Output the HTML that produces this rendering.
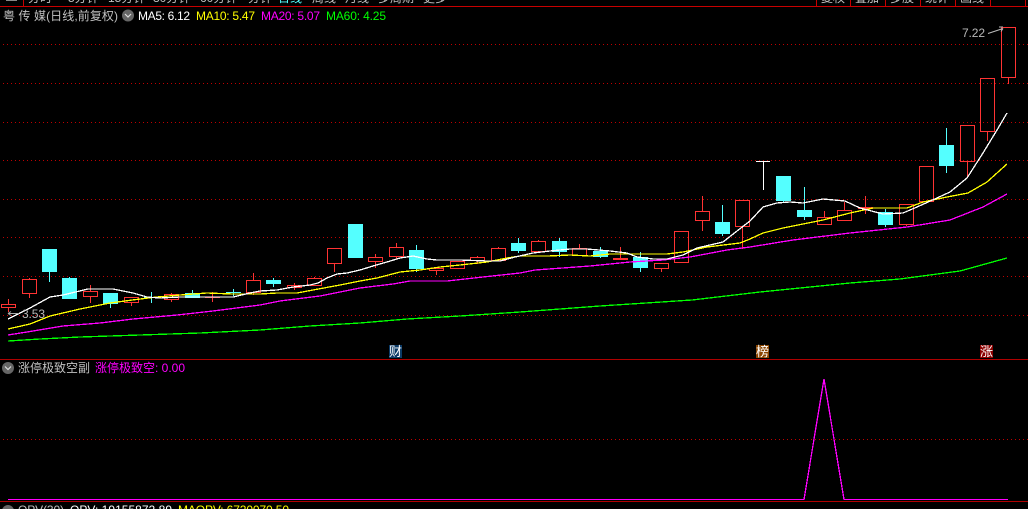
<!DOCTYPE html>
<html><head><meta charset="utf-8"><style>
html,body{margin:0;padding:0;background:#000;width:1028px;height:509px;overflow:hidden}
svg{display:block}
text{font-family:"Liberation Sans","WenQuanYi Zen Hei","Noto Sans CJK SC",sans-serif;font-size:12px}
</style></head><body>
<svg width="1028" height="509" viewBox="0 0 1028 509" xmlns="http://www.w3.org/2000/svg">
<rect width="1028" height="509" fill="#000"/>
<!-- toolbar -->
<g fill="#c0c0c0">
<text x="28" y="2">分时</text><text x="68" y="2">5分钟</text><text x="108" y="2">15分钟</text><text x="153" y="2">30分钟</text><text x="200" y="2">60分钟</text><text x="248" y="2">分钟</text>
<text x="278" y="2" fill="#54ffff">日线</text><text x="312" y="2">周线</text><text x="345" y="2">月线</text><text x="378" y="2">多周期</text><text x="423" y="2">更多</text>
<text x="821" y="2">复权</text><text x="855" y="2">叠加</text><text x="890" y="2">多股</text><text x="925" y="2">统计</text><text x="960" y="2">画线</text>
</g>
<rect x="6" y="0" width="11" height="1" fill="#888"/>
<g shape-rendering="crispEdges" stroke="#c80000" fill="none">
<path d="M0 6.500H1028M23.500 0V6M816.500 0V6M850.500 0V6M885.500 0V6M920.500 0V6M955.500 0V6M990.500 0V6M1025.500 0V6"/>
<path d="M0 359.500H1028M0 501.500H1028" stroke="#b00000"/>
</g>
<!-- grid -->
<g shape-rendering="crispEdges" stroke="#c00000" stroke-dasharray="1 3" fill="none">
<path d="M3 44.500H1028M3 83.500H1028M3 122.500H1028M3 160.500H1028M3 199.500H1028M3 237.500H1028M3 276.500H1028M3 315.500H1028M3 439.500H1028"/>
</g>
<!-- headings -->
<text x="3" y="20" fill="#c0c0c0" textLength="115" lengthAdjust="spacing">粤 传 媒(日线,前复权)</text>
<circle cx="128" cy="15.500" r="6" fill="#666"/><path d="M125 14l3 3 3-3" stroke="#ddd" stroke-width="1.200" fill="none"/>
<text x="138" y="20" fill="#fff" textLength="52">MA5: 6.12</text>
<text x="196" y="20" fill="#ff0" textLength="59">MA10: 5.47</text>
<text x="261" y="20" fill="#f0f" textLength="59">MA20: 5.07</text>
<text x="326" y="20" fill="#0f0" textLength="60">MA60: 4.25</text>
<!-- red candles -->
<g shape-rendering="crispEdges" fill="none" stroke="#ff3333">
<path d="M1.500 304.500h14v3h-14zM8.500 299v5M8.500 308v4
M22.500 279.500h14v14h-14zM29.500 278v1M29.500 294v4
M83.500 291.500h14v5h-14zM90.500 285v6M90.500 297v6
M124.500 297.500h14v5h-14zM131.500 303v3
M164.500 294.500h14v5h-14zM171.500 293v1M171.500 300v2
M205 297.500h15M212.500 292v10
M246.500 280.500h14v12h-14zM253.500 273v7M253.500 293v2
M287.500 285.500h14v2h-14zM294.500 283v2M294.500 288v2
M307.500 278.500h14v7h-14zM314.500 277v1
M327.500 248.500h14v15h-14zM334.500 264v8
M368.500 257.500h14v4h-14zM375.500 254v3M375.500 262v6
M389.500 247.500h14v9h-14zM396.500 243v4M396.500 257v2
M429.500 268.500h14v2h-14zM436.500 271v4
M450.500 261.500h14v7h-14z
M470.500 257.500h14v3h-14zM477.500 256v1M477.500 261v3
M491.500 248.500h14v12h-14zM498.500 247v1
M531.500 241.500h14v10h-14zM538.500 240v1
M572.500 248.500h14v7h-14zM579.500 244v4
M620.500 247v11
M654.500 263.500h14v5h-14zM661.500 269v3
M674.500 231.500h14v31h-14z
M695.500 211.500h14v9h-14zM702.500 196v15M702.500 221v10
M735.500 200.500h14v26h-14zM742.500 227v22
M817.500 217.500h14v7h-14zM824.500 211v6
M837.500 210.500h14v10h-14zM844.500 202v8
M865.500 196v11M865.500 209v5
M899.500 204.500h14v20h-14zM906.500 225v1
M919.500 166.500h14v35h-14z
M960.500 125.500h14v36h-14zM967.500 162v15
M980.500 78.500h14v53h-14zM987.500 132v9
M1001.500 27.500h14v50h-14zM1008.500 78v6"/>
<rect x="613" y="258" width="15" height="2" fill="#ff3333" stroke="none"/>
<rect x="858" y="207" width="15" height="2" fill="#ff3333" stroke="none"/>
</g>
<!-- cyan candles -->
<g shape-rendering="crispEdges" fill="#54ffff">
<rect x="42" y="249" width="15" height="23"/><rect x="62" y="278" width="15" height="21"/><rect x="103" y="293" width="15" height="11"/><rect x="185" y="293" width="15" height="5"/><rect x="266" y="280" width="15" height="4"/><rect x="348" y="224" width="15" height="34"/><rect x="409" y="250" width="15" height="19"/><rect x="511" y="243" width="15" height="8"/><rect x="552" y="241" width="15" height="11"/><rect x="593" y="251" width="15" height="6"/><rect x="633" y="257" width="15" height="11"/><rect x="715" y="222" width="15" height="12"/><rect x="776" y="176" width="15" height="25"/><rect x="797" y="210" width="15" height="7"/><rect x="878" y="212" width="15" height="13"/><rect x="939" y="145" width="15" height="21"/>
<path fill="none" stroke="#54ffff" d="M49.500 272v10M69.500 277v1M110.500 304v4M144 297.500h15M151.500 292v11M192.500 290v3M226 292.500h15M233.500 289v7M273.500 278v9M416.500 245v27M518.500 238v15M559.500 238v19M600.500 247v11M640.500 252v20M722.500 205v31M783.500 201v2M804.500 187v33M885.500 209v18M946.500 128v45"/>
</g>
<path shape-rendering="crispEdges" fill="none" stroke="#fff" d="M756 161.500h14M763.500 161v29"/>
<!-- MA lines -->
<g fill="none" shape-rendering="crispEdges" stroke-width="1.300">
<polyline stroke="#0f0" points="8,341 40,339 80,337 140,335 200,333 260,330 310,326 360,323 407,319 460,316 520,312 600,306 692,300 760,292 850,283 900,279 960,271 1007,258"/>
<polyline stroke="#f0f" points="8,335 27,332 63,326 100,323 133,319 177,315 213,311 260,305 280,301 320,296 360,288 393,284 410,281 447,281 483,277 520,273 535,270 590,266 630,262 663,260 690,257 727,250 750,247 793,240 850,233 907,227 950,220 983,207 1007,194"/>
<polyline stroke="#ff0" points="8,329 30,324 50,316 80,309 110,303 140,299 157,297 180,295 207,293 233,294 260,294 277,293 297,293 313,290 340,285 360,281 377,278 400,272 420,270 440,267 460,265 487,262 507,258 520,256 548,256 570,255 590,256 610,254 667,254 683,252 707,247 740,243 750,239 763,233 783,228 823,220 850,213 873,208 907,208 923,202 947,197 968,193 987,182 1007,164"/>
<polyline stroke="#fff" points="8,319 30,308 50,297 63,295 88,289 113,289 133,293 147,297 160,298 180,297 200,297 233,297 250,293 260,291 277,290 293,287 310,285 318,283 327,278 337,274 347,273 360,270 373,266 387,262 400,258 413,256 427,259 437,260 460,260 487,261 500,261 515,257 533,253 550,251 570,249 587,249 610,251 627,253 637,257 653,259 667,259 683,255 697,248 710,245 723,242 737,231 750,221 763,207 777,203 790,202 803,203 823,199 845,201 860,208 883,214 903,213 917,207 937,198 950,192 967,178 983,153 997,130 1007,113"/>
</g>
<!-- price labels -->
<text x="22" y="318" fill="#b8b8b8" textLength="23">3.53</text>
<path d="M8 313.500h11M8 313.500l3-2M8 313.500l3 2" stroke="#aaa" fill="none"/>
<text x="962" y="37" fill="#b8b8b8" textLength="23">7.22</text>
<path d="M988 33.500l15-5M1003 27h-4M1003 28.500l-2 3" stroke="#bbb" fill="none"/>
<!-- badges -->
<rect x="389" y="345" width="13" height="13" fill="#0b3a66"/><text x="389" y="356" fill="#fff" style="font-size:13px">财</text>
<rect x="756" y="345" width="13" height="13" fill="#8a4500"/><text x="756" y="356" fill="#fff" style="font-size:13px">榜</text>
<rect x="980" y="345" width="13" height="13" fill="#8b0000"/><text x="980" y="356" fill="#fff" style="font-size:13px">涨</text>
<!-- lower panel -->
<circle cx="8" cy="368" r="6" fill="#666"/><path d="M5 366.500l3 3 3-3" stroke="#ddd" stroke-width="1.200" fill="none"/>
<text x="18" y="372" fill="#c0c0c0" textLength="72">涨停极致空副</text>
<text x="95" y="372" fill="#f0f" textLength="90">涨停极致空: 0.00</text>
<polyline fill="none" stroke="#f0f" stroke-width="1.300" shape-rendering="crispEdges" points="8,499.500 804,499.500 824,379 844,499.500 1008,499.500"/>
<!-- bottom text -->
<circle cx="8" cy="511" r="6" fill="#666"/>
<text x="18" y="514" fill="#c0c0c0" textLength="46">OPV(30)</text>
<text x="70" y="514" fill="#fff" textLength="102">OPV: 19155872.89</text>
<text x="178" y="514" fill="#ff0" textLength="111">MAOPV: 6720070.50</text>
</svg>
</body></html>
